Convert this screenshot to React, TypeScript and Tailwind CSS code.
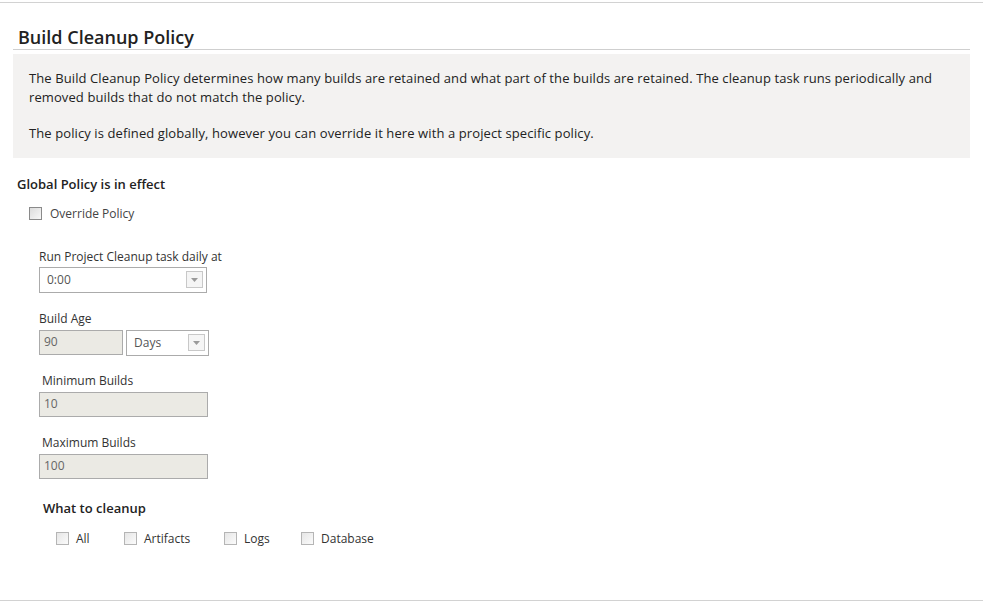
import React from "react";

const font = { fontFamily: '"Segoe UI", "Open Sans", "Noto Sans", sans-serif' };

function Box() {
  return <span className="inline-block w-[13px] h-[13px] border border-[#b5b5b5] bg-gradient-to-br from-[#e6e6e6] to-[#fbfbfb] shrink-0" />;
}

function Caret() {
  return (
    <span className="flex items-center justify-center w-[17px] h-[17px] border border-[#c8c8c8] bg-[#f5f5f5]">
      <svg width="7" height="4" viewBox="0 0 7 4">
        <path d="M0 0 L7 0 L3.5 4 Z" fill="#9a9a9a" />
      </svg>
    </span>
  );
}

function Select({ value, w }: { value: string; w: string }) {
  return (
    <div className={`flex items-center justify-between h-[26px] border border-[#ababab] bg-white pl-[7px] pr-[3px] ${w}`}>
      <span className="text-[12px] text-[#555]">{value}</span>
      <Caret />
    </div>
  );
}

function Input({ value, w }: { value: string; w: string }) {
  return (
    <div className={`flex items-center h-[25px] border border-[#ababab] bg-[#ebeae4] pl-[4px] ${w}`}>
      <span className="text-[12px] text-[#666]">{value}</span>
    </div>
  );
}

export default function App() {
  return (
    <div className="w-[983px] h-[601px] bg-white text-[#222] overflow-hidden" style={font}>
      <div className="border-t border-[#d2d2d2] mt-[2px]" />
      <div className="px-[13px]">
        <div className="mt-[22px] ml-[5px] text-[18px] font-semibold text-[#222] leading-[24px]">Build Cleanup Policy</div>
        <div className="w-[957px] border-b border-[#cfcfcf]" />
        <div className="w-[957px] mt-[4px] h-[104px] bg-[#f3f2f1] px-[16px] pt-[15px] text-[13px] leading-[19px] tracking-[0.1px] text-[#222]">
          <p>
            The Build Cleanup Policy determines how many builds are retained and what part of the builds are retained. The cleanup task runs periodically and removed builds that do not match the policy.
          </p>
          <p className="mt-[17px]">The policy is defined globally, however you can override it here with a project specific policy.</p>
        </div>
        <div className="mt-[17px] ml-[4px] text-[13px] font-semibold">Global Policy is in effect</div>
        <div className="mt-[10px] ml-[16px] flex items-center gap-[8px]">
          <span className="inline-block w-[13px] h-[13px] border border-[#8a8a8a] bg-gradient-to-br from-[#dcdcdc] to-[#f8f8f8]" />
          <span className="text-[12px] text-[#444]">Override Policy</span>
        </div>

        <div className="ml-[26px] mt-[26px] flex flex-col">
          <span className="text-[12px] text-[#333] leading-[16px]">Run Project Cleanup task daily at</span>
          <div className="mt-[2px]">
            <Select value="0:00" w="w-[168px]" />
          </div>

          <span className="mt-[18px] text-[12px] text-[#333] leading-[16px]">Build Age</span>
          <div className="mt-[3px] flex gap-[3px]">
            <Input value="90" w="w-[84px]" />
            <Select value="Days" w="w-[83px]" />
          </div>

          <span className="mt-[17px] ml-[3px] text-[12px] text-[#333] leading-[16px]">Minimum Builds</span>
          <div className="mt-[3px]">
            <Input value="10" w="w-[169px]" />
          </div>

          <span className="mt-[18px] ml-[3px] text-[12px] text-[#333] leading-[16px]">Maximum Builds</span>
          <div className="mt-[3px]">
            <Input value="100" w="w-[169px]" />
          </div>

          <span className="mt-[20px] ml-[4px] text-[13px] font-semibold leading-[18px]">What to cleanup</span>
          <div className="mt-[13px] ml-[17px] flex items-center text-[12px] text-[#333]">
            <div className="flex items-center gap-[7px] w-[68px]"><Box /><span>All</span></div>
            <div className="flex items-center gap-[7px] w-[100px]"><Box /><span>Artifacts</span></div>
            <div className="flex items-center gap-[7px] w-[77px]"><Box /><span>Logs</span></div>
            <div className="flex items-center gap-[7px]"><Box /><span>Database</span></div>
          </div>
        </div>
      </div>
      <div className="border-t border-[#d2d2d2] mt-[52px]" />
    </div>
  );
}
